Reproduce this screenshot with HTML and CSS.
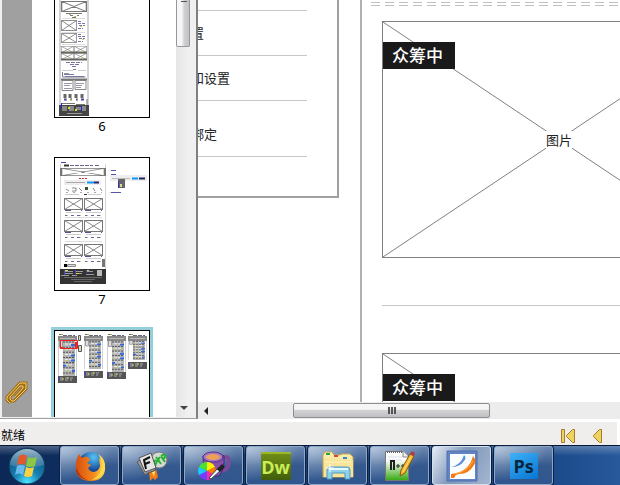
FILE: index.html
```html
<!DOCTYPE html>
<html lang="zh-CN">
<head>
<meta charset="utf-8">
<title>众筹中</title>
<link rel="stylesheet" href="styles.css">
</head>
<body>
<svg class="defs" aria-hidden="true">
  <defs>
    <symbol id="xbox" viewBox="0 0 20 12" preserveAspectRatio="none">
      <path d="M.5 .5H19.5V11.5H.5ZL19.5 11.5M19.5 .5L.5 11.5" fill="#fff" stroke="#777" stroke-width="1"/>
    </symbol>
    <symbol id="project" viewBox="0 0 20 20">
      <rect x=".5" y=".5" width="18" height="11" fill="#fff" stroke="#777"/>
      <path d="M.5 .5L18.500 11.500M18.500 .5L.5 11.500" stroke="#888"/>
      <path d="M1 12.500H7M17 12.500h1" stroke="#558"/>
      <path d="M2 14.500H17" stroke="#ccc"/>
      <path d="M1 17.500h2M7 17.500h3M13 17.500h3" stroke="#669"/>
      <path d="M3 17.500h1M16 17.500h1" stroke="#cc6"/>
    </symbol>
    <symbol id="sheet" viewBox="0 0 20 34" preserveAspectRatio="none">
      <path d="M.5 0V34M18.500 0V34" stroke="#ccc"/>
      <path d="M1.500 0v6h3V0" fill="#ddd" stroke="#999"/>
      <rect x="5" y="0" width="12" height="34" fill="#b4b4b4"/>
      <path d="M5 1h12M5 6h12M5 11h12M5 16h12M5 21h12M5 26h12M5 31h12" stroke="#555" stroke-dasharray="2 1"/>
      <path d="M7 3h8M7 8h8M7 13h8M7 18h8M7 23h8M7 28h8" stroke="#eee" stroke-dasharray="3 1"/>
      <path d="M13 4h4M13 14h4M13 19h4M5 24h3M14 29h3" stroke="#36d" stroke-width="2"/>
      <path d="M7 9h2M7 19h2M9 29h2" stroke="#cc5"/>
    </symbol>
    <symbol id="sheethead" viewBox="0 0 20 8">
      <path d="M1 1.500h4M5 2.500h12" stroke="#667" stroke-dasharray="4 1"/>
      <path d="M3 1.500h2" stroke="#aa3"/>
      <path d="M0 3h19v5H0z" fill="#888"/><path d="M2 5.500h15" stroke="#bbb"/>
    </symbol>
    <symbol id="sheetfoot" viewBox="0 0 20 7">
      <path d="M0 0h19v7H0z" fill="#555"/>
      <path d="M2 2h14M2 4h12" stroke="#aab" stroke-dasharray="3 2"/><path d="M4 3h2M9 2h2" stroke="#dd4"/>
      <path d="M1 1v3" stroke="#44d"/>
    </symbol>
    <radialGradient id="orb" cx=".5" cy=".95" r=".9"><stop stop-color="#4ce6ff"/><stop offset=".4" stop-color="#1680b2"/><stop offset="1" stop-color="#134a7c"/></radialGradient>
    <linearGradient id="shine" x2="0" y2="1"><stop stop-color="#dce8ee"/><stop offset="1" stop-color="#8fb2c8" stop-opacity=".35"/></linearGradient>
    <linearGradient id="fox" x1="0" x2="1"><stop stop-color="#d84e10"/><stop offset=".6" stop-color="#f4881c"/><stop offset="1" stop-color="#ffe14a"/></linearGradient>
    <radialGradient id="globe" cx=".6" cy=".2"><stop stop-color="#58c4f4"/><stop offset="1" stop-color="#174a9a"/></radialGradient>
    <linearGradient id="folder" x2="0" y2="1"><stop stop-color="#fff3b8"/><stop offset="1" stop-color="#e9cb66"/></linearGradient>
    <linearGradient id="note" x2="0" y2="1"><stop offset=".3" stop-color="#fff"/><stop offset="1" stop-color="#35a80f"/></linearGradient>
  </defs>
</svg>

<div class="workspace">
  <aside class="sidebar">
    <div class="rail">
      <button class="attach" type="button" aria-label="附件">
        <svg width="24" height="26" viewBox="0 0 24 26" fill="none" stroke-linejoin="miter">
          <path d="M10 18L18 9V7H15L5 18V20L7 22H9L21 10V4H15L2 18V21L5 24" stroke="#a06c18" stroke-width="3"/>
          <path d="M10 18L18 9V7H15L5 18V20L7 22H9L21 10V4H15L2 18V21L5 24" stroke="#f5d36a" stroke-width="1"/>
        </svg>
      </button>
    </div>
    <ol class="thumbs">
      <li class="thumb">
        <div class="sheet">
          <svg viewBox="55 -15 94 132">
            <path d="M59 -15H89V116H59z" fill="#d4d4d4"/><path d="M61 -15H87V112H61z" fill="#fff"/>
            <use href="#xbox" x="61" y="1" width="26" height="11"/>
            <path d="M66 13.500h16M70 15.500h3m4 0h2M72 17.500h4" stroke="#777"/><path d="M69 14.500h2m3 2h2" stroke="#bb6"/>
            <path d="M62 18.500h23M62 32.500h23M62 44.500h23" stroke="#ddd"/>
            <use href="#xbox" x="61" y="20" width="16" height="11"/><use href="#xbox" x="61" y="33" width="16" height="10"/>
            <path d="M78 21.500h3m-3 2h7m-6 2h6m-7 3h5M78 34.500h3m-3 2h7m-6 2h6m-7 3h5" stroke="#77a" stroke-dasharray="3 1"/>
            <path d="M80 26.500h2m0 13h2" stroke="#cc5"/>
            <g><use href="#xbox" x="61" y="46" width="13" height="7"/><use href="#xbox" x="74" y="46" width="13" height="7"/><use href="#xbox" x="61" y="53" width="13" height="7"/><use href="#xbox" x="74" y="53" width="13" height="7"/></g>
            <path d="M61 52.500H87M61 59.500H87" stroke="#666" stroke-width="2"/><path d="M68 51h2m11 0h2m-15 7h2m11 0h2" stroke="#cc6"/>
            <path d="M66 62.500h16M70 64.500h9M72 66.500h5M73 69.500h3" stroke="#779" stroke-dasharray="4 1"/>
            <path d="M62 70.500h11m5 0h8" stroke="#ccc"/>
            <path d="M62.500 72v5h23M64 74.500h10M65 76.500h19" stroke="#779" fill="none"/><path d="M64 73.500h5" stroke="#999"/>
            <path d="M62 80.500h11v10h-11zM75 80.500h11v9h-11z" stroke="#888" fill="#fff"/><path d="M61 79.500h26" stroke="#777" stroke-width="2"/>
            <path d="M64 83.500h8m-8 2h6m-6 3h8m4-5h8m-8 2h6m-6 2h5" stroke="#99a"/>
            <path d="M65 94v4m5-4v4m6-4v4m6-4v4" stroke="#666" stroke-width="3"/><path d="M64 99.500h3m3 0h2m4 0h2m3 0h3" stroke="#44a" stroke-width="2"/><path d="M66 99h1m3 1h2m5-1h1" stroke="#ee3"/>
            <path d="M62 103.500h13m1 1h9M87 99v6" stroke="#777"/>
            <path d="M59 105H89V116H59z" fill="#444"/><path d="M62 106h5v5h-5zM69 106h5v5h-5zM76 107h5v3h-5zM82 106h4v5h-4z" fill="#888"/><path d="M68 107h2v2h-2zM75 109h2v2h-2z" fill="#dd4"/><path d="M61.500 103v5M81.500 106v5" stroke="#22d"/><path d="M67 113.500h15" stroke="#999"/>
          </svg>
        </div>
        <span class="caption">6</span>
      </li>
      <li class="thumb">
        <div class="sheet">
          <svg viewBox="55 158 94 132">
            <path d="M60 164h46v120H60z" fill="#d4d4d4"/><path d="M61 164h44v120H61z" fill="#fff"/>
            <path d="M61 162.500h5" stroke="#44a"/><path d="M64 165.500h5" stroke="#333" stroke-width="2"/><path d="M70 165.500h23m2 0h5" stroke="#668" stroke-dasharray="4 1"/>
            <use href="#xbox" x="60" y="168" width="46" height="8"/>
            <path d="M79 178.500h8" stroke="#b33" stroke-dasharray="2 1"/><path d="M64 180h37v5H64z" fill="#eee"/><path d="M66 182.500h19" stroke="#aaa"/><path d="M87 182.500h7" stroke="#19f" stroke-width="2"/><path d="M94 182.500h5" stroke="#226" stroke-width="2"/>
            <path d="M66 189l3 2m3-3h4v3h-4m7-3l3 3m6-3l-2 2m7-2l2 3m5-3l2 3" stroke="#888" fill="none"/><path d="M85 187h3v3h-3z" fill="#353"/><path d="M66 192.500h36" stroke="#aaa" stroke-dasharray="2 5"/>
            <path d="M65 194.500h14m9 0h13" stroke="#ccc"/><path d="M84 194.500h3" stroke="#333"/>
            <use href="#project" x="64" y="198" width="20" height="20"/><use href="#project" x="84" y="198" width="20" height="20"/>
            <path d="M65 217.500h37M65 241.500h37" stroke="#ddd"/>
            <use href="#project" x="64" y="220" width="20" height="20"/><use href="#project" x="84" y="220" width="20" height="20"/>
            <use href="#project" x="64" y="244" width="20" height="20"/><use href="#project" x="84" y="244" width="20" height="20"/>
            <path d="M64 264h3v3h-3z"/><path d="M67.500 264.500h8v2h-8z" stroke="#888" fill="#ddd"/>
            <path d="M102 259h3v8h-3z" fill="#777"/>
            <path d="M60 269h46v15H60z" fill="#333"/><path d="M65 271.500h8m-8 2h8m3-2h7m-7 2h6m4-2h7m-7 3h8m-22 1h5m-16 0h8" stroke="#999"/><path d="M65 270.500h3m8 3h3m7-3h3" stroke="#dd3"/><path d="M64.500 270v5M75.500 270v4M86.500 270v3" stroke="#44d"/><path d="M97 270h5v6h-5z" fill="#bbb"/><path d="M64 277.500h38M71 279.500h24M74 281.500h18" stroke="#666"/>
            <path d="M111 170.500h5m-5 4h5m-5 18h10" stroke="#55a" stroke-width="1"/><path d="M109 170.500h2m-2 22h2" stroke="#cec"/>
            <path d="M110 175h37v6h-37z" fill="#eee"/><path d="M112 178.500h18" stroke="#bbb"/><path d="M132 178.500h6" stroke="#19f" stroke-width="2"/><path d="M139 178.500h6" stroke="#226" stroke-width="2"/>
            <path d="M118 179h7v9h-7z" fill="#666"/><path d="M118.500 181v7" stroke="#33c"/><path d="M120 184h2v3h-2z" fill="#dd8"/>
          </svg>
        </div>
        <span class="caption">7</span>
      </li>
      <li class="thumb current">
        <div class="sheet">
          <svg viewBox="55 331 94 132">
            <use href="#sheethead" x="58" y="333" width="20" height="8"/><use href="#sheet" x="58" y="341" width="20" height="35"/><use href="#sheetfoot" x="58" y="376" width="20" height="7"/>
            <path d="M60.500 340.500h17v8h-17z" fill="none" stroke="#e22"/><path d="M75 342h3v6h-3z" fill="#e22"/><path d="M60 347h3v2h-3z" fill="#e22"/>
            <path d="M78.500 335.500h2v5h-2zM78.500 345.500h3v6h-3z" fill="#dda" stroke="#556"/>
            <use href="#sheethead" x="84" y="333" width="20" height="8"/><use href="#sheet" x="84" y="341" width="20" height="28"/><use href="#sheetfoot" x="84" y="371" width="20" height="7"/>
            <use href="#sheethead" x="107" y="333" width="20" height="8"/><use href="#sheet" x="107" y="341" width="20" height="31"/><use href="#sheetfoot" x="107" y="372" width="20" height="7"/>
            <use href="#sheethead" x="128" y="333" width="20" height="8"/><use href="#sheet" x="128" y="341" width="20" height="19"/><use href="#sheetfoot" x="128" y="362" width="20" height="7"/>
          </svg>
        </div>
      </li>
    </ol>
    <div class="vscroll">
      <div class="vhandle"></div>
      <button class="arrow" type="button" aria-label="向下滚动"><svg width="8" height="5" viewBox="0 0 8 5"><path d="M0 0h8L4 4z" fill="#444"/></svg></button>
    </div>
  </aside>

  <main class="document">
    <div class="canvas">
      <ul class="menu">
        <li class="menu-item first"></li>
        <li class="menu-item">置</li>
        <li class="menu-item">和设置</li>
        <li class="menu-item tall">绑定</li>
      </ul>
      <section class="page">
        <div class="dashes"></div>
        <div class="picture">
          <svg class="cross" viewBox="0 0 354 236" preserveAspectRatio="none"><path d="M0 0L354 236M354 0L0 236" stroke="#808080" stroke-width="1"/></svg>
          <span class="badge">众筹中</span>
          <span class="picture-label">图片</span>
        </div>
        <hr class="divider">
        <div class="picture">
          <svg class="cross" viewBox="0 0 354 236" preserveAspectRatio="none"><path d="M0 0L354 236M354 0L0 236" stroke="#808080" stroke-width="1"/></svg>
          <span class="badge">众筹中</span>
        </div>
      </section>
    </div>
    <div class="hscroll">
      <button class="arrow" type="button" aria-label="向左滚动"><svg width="5" height="8" viewBox="0 0 5 8"><path d="M4 0v8L0 4z" fill="#222"/></svg></button>
      <div class="hhandle"></div>
    </div>
  </main>
</div>

<footer class="status">
  <span class="status-text">就绪</span>
  <div class="pager">
    <button type="button" aria-label="第一页"><svg width="16" height="16" viewBox="0 0 16 16"><path d="M1.500 1.500h3v13h-3zM14.500 1.500v13h-2l-6-6v-1l6-6z" fill="#ecd45f" stroke="#a87a2c"/></svg></button>
    <button type="button" aria-label="上一页"><svg width="16" height="16" viewBox="0 0 16 16"><path d="M12.500 1.500v13h-2l-6-6v-1l6-6z" fill="#ecd45f" stroke="#a87a2c"/></svg></button>
  </div>
  <div class="page-field"></div>
</footer>

<nav class="taskbar">
  <button class="start" type="button" aria-label="开始">
    <svg width="40" height="38" viewBox="0 0 40 38">
      <circle cx="20" cy="19" r="18" fill="url(#orb)" stroke="#13344f" stroke-width="1"/>
      <path d="M3 18a17 16 0 0 1 34 0q-17 5-34 0z" fill="url(#shine)" opacity=".7"/>
      <path d="M12 9q4-3 8 0l-2 9q-4-2-8 0z" fill="#e4582a"/>
      <path d="M21 10q4 2 9 0l-2 9q-5 2-9 0z" fill="#8dc641"/>
      <path d="M10 19q4-2 8 0l-2 9q-4-3-8 0z" fill="#68b9ec"/>
      <path d="M19 20q4 2 8 0l-2 9q-4 2-8 0z" fill="#fbd043"/>
    </svg>
  </button>
  <button class="task" type="button" aria-label="Firefox">
    <svg width="32" height="32" viewBox="0 0 32 32">
      <circle cx="17" cy="15" r="13" fill="url(#globe)"/>
      <path d="M5 4l3 4q3-2 6-1l2 3-3 3 4 2-3 3q2 4 6 4 5-1 6-6l-1-8q7 5 6 12-2 11-14 11Q4 31 2 20 1 11 5 4z" fill="url(#fox)"/>
      <path d="M24 4q8 5 7 14-3 11-13 12 9-5 10-13 0-7-4-13z" fill="#ffd94a"/>
      <path d="M3 18q2 9 11 12-9-1-12-9z" fill="#b93408"/>
    </svg>
  </button>
  <button class="task" type="button" aria-label="FlashFXP">
    <svg width="32" height="32" viewBox="0 0 32 32">
      <path d="M13 21l7-2 2 8-3 3-2-2-3 3z" fill="#f47c18"/><path d="M16 22l3-1-1 6z" fill="#ffe36b"/>
      <path d="M1 12l6-4 13 12-8 3-3 2z" fill="#999" stroke="#555"/>
      <circle cx="23" cy="10" r="8" fill="#d4d8d4" stroke="#777"/>
      <path d="M17 12l3 4m-3-4l3-2m-1 4l2-1M20 7l5 7m-5-1l4-6M25 6l4 6m-4-6q4-3 4 0t-3 3" stroke="#24b32c" stroke-width="2" fill="none"/>
      <path d="M3 8l12-5 5 15-11 4z" fill="#e4e4e4" stroke="#555"/>
      <path d="M10 19L8 10l6-3M9 14l5-2" stroke="#111" stroke-width="2" fill="none"/>
    </svg>
  </button>
  <button class="task" type="button" aria-label="取色工具">
    <svg width="34" height="32" viewBox="0 0 34 32">
      <path d="M25 8q7-3 7 4t-7 9" fill="none" stroke="#7a4b9d" stroke-width="4"/>
      <path d="M6 6q11-6 21 0 1 13-5 20H12Q6 20 6 6z" fill="#8650aa" stroke="#4b266e"/>
      <ellipse cx="16" cy="7" rx="10" ry="5" fill="#a877c8" stroke="#583080"/><ellipse cx="16" cy="7" rx="7" ry="3" fill="#e9a256"/>
      <path d="M10 21V12a9 9 0 0 1 8 5z" fill="#fff000"/><path d="M10 21l8-4a9 9 0 0 1 0 8z" fill="#ff7b00"/><path d="M10 21l8 4a9 9 0 0 1-8 5z" fill="#fa2b9f"/><path d="M10 21v9a9 9 0 0 1-8-5z" fill="#763bff"/><path d="M10 21l-8 4a9 9 0 0 1 0-8z" fill="#1bcaff"/><path d="M10 21l-8-4a9 9 0 0 1 8-5z" fill="#48e335"/>
      <path d="M12 28l8-9 3 2-9 8z" fill="#e8f6ff" stroke="#345"/><path d="M20 19l5-5 3 3-5 5z" fill="#222"/>
    </svg>
  </button>
  <button class="task" type="button"><span class="app dw">Dw</span></button>
  <button class="task" type="button" aria-label="资源管理器">
    <svg width="32" height="32" viewBox="0 0 32 32">
      <path d="M1 5l2-3h7l2 3h6l2-1h8l3 3v20H1z" fill="url(#folder)" stroke="#c7aa51"/>
      <path d="M4 3h4v2H4z" fill="#27a13a"/><path d="M12 5h4v2h-4z" fill="#d84735"/><path d="M21 7h4v2h-4z" fill="#3284d4"/>
      <path d="M2 8h10l2 2h17v17H2z" fill="#f8e49a"/><path d="M3 12h26" stroke="#fff5c2"/>
      <path d="M5 29V20q0-3 3-3h17q3 0 3 3v9h-5v-6H10v6z" fill="#8fd0eb" stroke="#4a9ac6"/><path d="M7 19h19" stroke="#e4fbff" stroke-width="2"/><path d="M8 14v8M4 18h8" stroke="#fff"/>
    </svg>
  </button>
  <button class="task" type="button" aria-label="Notepad++">
    <svg width="32" height="34" viewBox="0 0 32 34">
      <path d="M1.500 2.500h18l5 5v24h-23z" fill="url(#note)" stroke="#777"/><path d="M3 3h16" stroke="#666" stroke-width="2" stroke-dasharray="1 1"/>
      <path d="M4 8h14M4 11h14" stroke="#dde"/><path d="M19 2v6h6" fill="#eee" stroke="#888"/>
      <path d="M7 21V12h3v9" fill="none" stroke="#222" stroke-width="2"/><path d="M12 17h4m-2-2v4M17 17h4m-2-2v4" stroke="#222"/>
      <path d="M26 5l4 2-9 17-5 3 1-6z" fill="#f6b72c" stroke="#875813"/><path d="M26 5l2-3 3 2-1 3z" fill="#b33a47"/><path d="M27 8l-8 15" stroke="#ffe58a"/>
    </svg>
  </button>
  <button class="task active" type="button" aria-label="PDF 阅读器">
    <svg width="32" height="32" viewBox="0 0 32 32">
      <path d="M1 1h30v30H1z" fill="#6384c4" stroke="#4e70b0"/><path d="M4 4h25v25H4z" fill="#fafdff"/>
      <path d="M5 17Q15 15 18 5q3 3 0 6-4 6-13 6z" fill="#5c91d6"/>
      <path d="M5 24Q23 22 27 6q4 4 1 9-5 9-15 9l-3 1-2 3H5z" fill="#f47b12"/><path d="M8 24Q21 22 27 11" stroke="#ffb24b" fill="none"/>
    </svg>
  </button>
  <button class="task" type="button"><span class="app ps">Ps</span></button>
</nav>
</body>
</html>
```
FILE: styles.css
```css
* { box-sizing: border-box; }

body {
  margin: 0;
  height: 100vh;
  display: flex;
  flex-direction: column;
  overflow: hidden;
  background: #f0eded;
  color: #000;
  font: 13px/16px "Noto Sans", "Noto Sans CJK SC", sans-serif;
}

button {
  display: flex;
  align-items: center;
  justify-content: center;
  flex: none;
  margin: 0;
  padding: 0;
  border: 0;
  background: none;
  font: inherit;
}

ul, ol { margin: 0; padding: 0; list-style: none; }

.defs { position: absolute; width: 0; height: 0; }

/* Workspace */
.workspace { flex: 1; min-height: 0; display: flex; }

.sidebar {
  flex: none;
  display: flex;
  padding: 0 6px 1px 2px;
  background: #f0f0f0;
  border-right: 2px solid #808080;
  border-bottom: 1px solid #a0a0a0;
}

.rail {
  width: 30px;
  display: flex;
  align-items: flex-end;
  justify-content: center;
  padding-bottom: 12px;
  background: #a0a0a0;
}

.thumbs { width: 144px; overflow: hidden; background: #fff; }
.thumb { padding: 0 26px 23px 22px; }
.thumb:first-child { margin-top: -16px; }

.sheet { height: 134px; border: 1px solid #000; background: #fff; }
.sheet svg { display: block; width: 100%; height: 100%; }
.current .sheet { box-shadow: 0 0 0 3px #94d0dc; }
.caption { display: block; text-align: center; }

.vscroll {
  width: 14px;
  display: flex;
  flex-direction: column;
  justify-content: space-between;
  background: linear-gradient(90deg, #e6e6e6, #f2f2f2);
}

.vhandle {
  height: 47px;
  border: 1px solid #979797;
  border-top: 0;
  border-radius: 0 0 2px 2px;
  background: linear-gradient(#555, #555) 4px 1px / 6px 1px no-repeat, linear-gradient(90deg, #f6f6f6 40%, #d0d0d4 60%, #c2c2c6);
}

.vscroll .arrow { height: 18px; padding-left: 2px; }

/* Document */
.document { flex: 1; min-width: 0; display: flex; flex-direction: column; }

.canvas {
  flex: 1;
  min-height: 0;
  display: flex;
  align-items: flex-start;
  overflow: hidden;
  background: #fff;
}

.menu {
  flex: none;
  width: 148px;
  height: 198px;
  margin-left: -7px;
  padding-right: 30px;
  border: 2px solid #a0a0a0;
  border-width: 0 2px 2px 0;
  color: #222;
}

.menu-item { height: 45px; line-height: 44px; border-bottom: 1px solid #c8c8c8; }
.menu-item.first { height: 11px; }
.menu-item.tall { height: 56px; padding-top: 11px; }

.page {
  flex: none;
  width: 420px;
  height: 100%;
  overflow: hidden;
  margin-left: 21px;
  padding-left: 20px;
  border-left: 2px solid #b0b0b0;
}

.dashes {
  height: 4px;
  margin: 2px 0 15px -11px;
  background: linear-gradient(#fff, #fff) 0 1px / 100% 2px no-repeat, repeating-linear-gradient(90deg, #c0c0c0 0 9px, #fff 9px 14px);
}

.picture {
  position: relative;
  display: flex;
  align-items: center;
  justify-content: center;
  width: 354px;
  height: 237px;
  border: 1px solid #808080;
}

.cross { position: absolute; inset: 0; width: 100%; height: 100%; }

.badge {
  position: absolute;
  top: 20px;
  left: 0;
  padding: 0 12px 0 9px;
  background: #1a1a1a;
  color: #fff;
  font-size: 17px;
  font-weight: 500;
  line-height: 27px;
}

.picture-label { position: relative; background: #fff; color: #222; line-height: 18px; }

.divider { height: 1px; margin: 47px 0; border: 0; background: #c8c8c8; }

.hscroll { flex: none; height: 17px; display: flex; align-items: center; background: #ececec; }
.hscroll .arrow { width: 17px; }

.hhandle {
  width: 197px;
  height: 15px;
  margin-left: 78px;
  border: 1px solid #8e8e8e;
  border-radius: 2px;
  background: repeating-linear-gradient(90deg, #555 0 2px, transparent 2px 3px) center / 8px 7px no-repeat, linear-gradient(#f5f5f5 40%, #d2d2d4 50%, #c0c0c4);
}

/* Status bar */
.status {
  flex: none;
  display: flex;
  align-items: stretch;
  height: 26px;
  border-top: 3px solid #808080;
  border-image: linear-gradient(#fff 66%, #808080 66%) 3 0 0;
  background: #f0eded;
}

.status-text { flex: 1; padding-left: 1px; font-size: 12px; line-height: 28px; }
.pager { display: flex; gap: 13px; padding-right: 12px; padding-top: 4px; }
.pager button { width: 16px; }
.page-field { width: 3px; background: #fff; }

/* Taskbar */
.taskbar {
  flex: none;
  display: flex;
  gap: 3px;
  height: 40px;
  padding-left: 6px;
  border-top: 1px solid #061734;
  background: linear-gradient(#ffffff44, transparent 25%), linear-gradient(90deg, #0c2857, #173f7a 45%, #174484 85%, #28599b);
}

.start { width: 42px; margin-right: 9px; }

.task {
  width: 59px;
  height: 39px;
  border: 1px solid #8fa6c4;
  border-radius: 3px;
  box-shadow: 0 0 0 1px #0a2144;
  background: radial-gradient(ellipse at 0 0, #dce8f4aa, transparent 65%), linear-gradient(#6b88b1, #35598e 50%, #2f568e);
}

.task.active { background: linear-gradient(120deg, #e5ecf5, #8098ba 45%, #a4b6d0); border-color: #d4dfec; }

.app { font: bold 18px/26px "Open Sans", sans-serif; text-align: center; }
.dw { width: 30px; color: #cbed58; background: linear-gradient(#6f8c17, #405e0c); border-top: 2px solid #9bb829; }
.ps { width: 28px; color: #06253f; background: linear-gradient(150deg, #3fb1f5, #0575d2); }
```
